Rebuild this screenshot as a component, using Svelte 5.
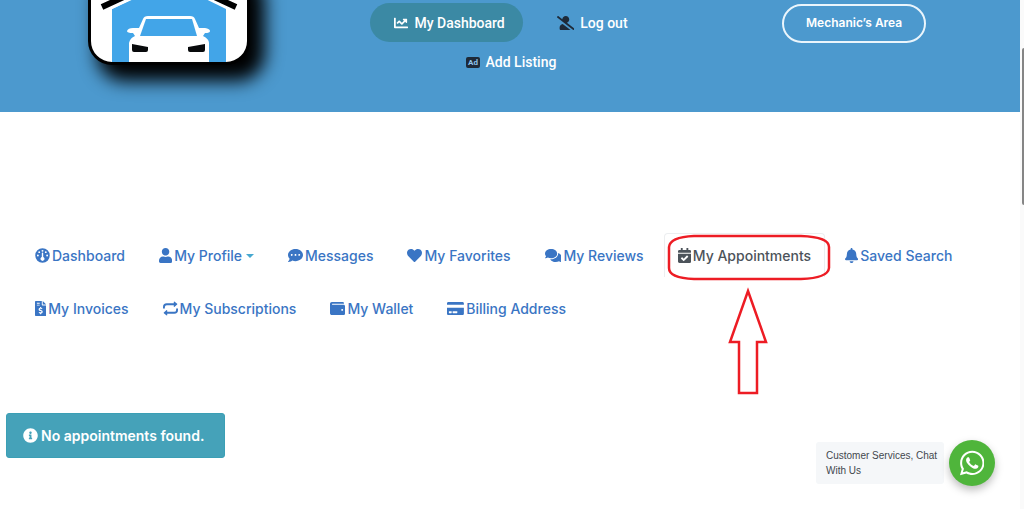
<script>
  const icons = {
    chart: { w: 512, d: 'M496 384H64V80c0-8.84-7.16-16-16-16H16C7.16 64 0 71.16 0 80v336c0 17.67 14.33 32 32 32h464c8.84 0 16-7.16 16-16v-32c0-8.84-7.16-16-16-16zM464 96H345.94c-21.38 0-32.09 25.85-16.97 40.97l32.4 32.4L288 242.75l-73.37-73.37c-12.5-12.5-32.76-12.5-45.25 0l-68.69 68.69c-6.25 6.25-6.25 16.38 0 22.63l22.62 22.62c6.25 6.25 16.38 6.25 22.63 0L192 237.25l73.37 73.37c12.5 12.5 32.76 12.5 45.25 0l96-96 32.4 32.4c15.12 15.12 40.97 4.41 40.97-16.97V112c.01-8.84-7.15-16-15.99-16z' },
    userSlash: { w: 640, d: 'M633.8 458.1L362.3 248.3C412.1 230.7 448 183.8 448 128 448 57.3 390.7 0 320 0c-67.1 0-121.5 51.8-126.9 117.4L45.5 3.4C38.5-2 28.5-.8 23 6.2L3.4 31.4c-5.4 7-4.2 17 2.8 22.4l588.4 454.7c7 5.4 17 4.2 22.5-2.8l19.6-25.3c5.4-6.8 4.1-16.9-2.9-22.3zM96 422.4V464c0 26.5 21.5 48 48 48h350.2L207.4 290.3C144.2 301.3 96 356 96 422.4z' },
    gauge: { w: 512, d: 'M256 8a248 248 0 1 0 0 496a248 248 0 1 0 0-496zM256 64a34 34 0 1 1 0 68a34 34 0 1 1 0-68zM144 110a32 32 0 1 1 0 64a32 32 0 1 1 0-64zM368 110a32 32 0 1 1 0 64a32 32 0 1 1 0-64zM98 222a32 32 0 1 1 0 64a32 32 0 1 1 0-64zM414 222a32 32 0 1 1 0 64a32 32 0 1 1 0-64zM232 180a24 24 0 0 1 48 0v128a68 68 0 1 1-48 0z' },
    user: { w: 448, d: 'M224 256c70.7 0 128-57.3 128-128S294.7 0 224 0 96 57.3 96 128s57.3 128 128 128zm89.6 32h-16.7c-22.2 10.2-46.9 16-72.9 16s-50.6-5.8-72.9-16h-16.7C60.2 288 0 348.2 0 422.4V464c0 26.5 21.5 48 48 48h352c26.5 0 48-21.5 48-48v-41.6c0-74.2-60.2-134.4-134.4-134.4z' },
    message: { w: 512, d: 'M256 32C114.6 32 0 125.1 0 240c0 49.6 21.4 95 57 130.7C44.5 421.1 2.7 466 2.2 466.5c-2.2 2.3-2.8 5.7-1.5 8.7S4.8 480 8 480c66.3 0 116-31.8 140.6-51.4 32.7 12.3 69 19.4 107.4 19.4 141.4 0 256-93.1 256-208S397.4 32 256 32zM128 272c-17.7 0-32-14.3-32-32s14.3-32 32-32 32 14.3 32 32-14.3 32-32 32zm128 0c-17.7 0-32-14.3-32-32s14.3-32 32-32 32 14.3 32 32-14.3 32-32 32zm128 0c-17.7 0-32-14.3-32-32s14.3-32 32-32 32 14.3 32 32-14.3 32-32 32z' },
    heart: { w: 512, d: 'M462.3 62.6C407.5 15.9 326 24.3 275.7 76.2L256 96.5l-19.7-20.3C186.1 24.3 104.5 15.9 49.7 62.6c-62.8 53.6-66.1 149.8-9.9 207.9l193.5 199.8c12.5 12.9 32.8 12.9 45.3 0l193.5-199.8c56.3-58.1 53-154.3-9.8-207.9z' },
    comments: { w: 576, d: 'M416 192c0-88.4-93.1-160-208-160S0 103.6 0 192c0 34.3 14.1 65.9 38 92-13.4 30.2-35.5 54.2-35.8 54.5-2.2 2.3-2.8 5.7-1.5 8.7S4.8 352 8 352c36.6 0 66.9-12.3 88.7-25 32.2 15.7 70.3 25 111.3 25 114.9 0 208-71.6 208-160zm122 220c23.9-26 38-57.7 38-92 0-66.9-53.5-124.2-129.3-148.1.9 6.6 1.3 13.3 1.3 20.1 0 105.9-107.7 192-240 192-10.8 0-21.3-.8-31.7-1.9C207.8 439.6 281.8 480 368 480c41 0 79.1-9.2 111.3-25 21.8 12.7 52.1 25 88.7 25 3.2 0 6.1-1.9 7.3-4.8 1.3-2.9.7-6.3-1.5-8.7-.3-.3-22.4-24.2-35.8-54.5z' },
    calendar: { w: 448, d: 'M436 160H12c-6.627 0-12-5.373-12-12v-36c0-26.51 21.49-48 48-48h48V12c0-6.627 5.373-12 12-12h40c6.627 0 12 5.373 12 12v52h128V12c0-6.627 5.373-12 12-12h40c6.627 0 12 5.373 12 12v52h48c26.51 0 48 21.49 48 48v36c0 6.627-5.373 12-12 12zM12 192h424c6.627 0 12 5.373 12 12v260c0 26.51-21.49 48-48 48H48c-26.51 0-48-21.49-48-48V204c0-6.627 5.373-12 12-12zm333.296 95.947l-28.169-28.398c-4.667-4.705-12.265-4.736-16.97-.068L194.12 364.665l-45.98-46.352c-4.667-4.705-12.266-4.736-16.971-.068l-28.397 28.17c-4.705 4.667-4.736 12.265-.068 16.97l82.601 83.269c4.667 4.705 12.265 4.736 16.97.068l142.953-141.805c4.705-4.667 4.736-12.265.068-16.97z' },
    bell: { w: 448, d: 'M224 512c35.32 0 63.97-28.65 63.97-64H160.03c0 35.35 28.65 64 63.97 64zm215.39-149.71c-19.32-20.76-55.47-51.99-55.47-154.29 0-77.7-54.48-139.9-127.94-155.16V32c0-17.67-14.32-32-31.98-32s-31.98 14.33-31.98 32v20.84C118.56 68.1 64.08 130.3 64.08 208c0 102.3-36.15 133.53-55.47 154.29-6 6.45-8.66 14.16-8.61 21.71.11 16.4 12.98 32 32.1 32h383.8c19.12 0 32-15.6 32.1-32 .05-7.55-2.61-15.27-8.61-21.71z' },
    invoice: { w: 384, d: 'M24 0H232V128a24 24 0 0 0 24 24H384V488a24 24 0 0 1-24 24H24a24 24 0 0 1-24-24V24A24 24 0 0 1 24 0zM64 60V92H160V60zM64 124V156H160V124zM264 0L384 120H264zM174 204V232C144 236 124 256 124 286C124 320 150 334 182 344C212 354 220 358 220 370C220 382 210 388 194 388C176 388 160 382 146 372L124 402C138 414 156 422 174 424V452H210V424C242 420 262 400 262 368C262 332 236 318 202 308C174 300 166 296 166 284C166 274 176 268 190 268C206 268 220 272 234 282L254 250C240 240 226 234 210 232V204z' },
    repeat: { w: 512, d: 'M0 256V208A128 128 0 0 1 128 80H368V36C368 18 386 12 398 22L484 98A16 16 0 0 1 484 122L398 198C386 208 368 202 368 184V144H128A64 64 0 0 0 64 208V256zM512 256V304A128 128 0 0 1 384 432H144V476C144 494 126 500 114 490L28 414A16 16 0 0 1 28 390L114 314C126 304 144 310 144 328V368H384A64 64 0 0 0 448 304V256z' },
    wallet: { w: 512, d: 'M461.2 128H80c-8.84 0-16-7.16-16-16s7.16-16 16-16h384c8.84 0 16-7.16 16-16 0-26.51-21.49-48-48-48H64C28.65 32 0 60.65 0 96v320c0 35.35 28.65 64 64 64h397.2c28.02 0 50.8-21.53 50.8-48V176c0-26.47-22.78-48-50.8-48zM416 336c-17.67 0-32-14.33-32-32s14.33-32 32-32 32 14.33 32 32-14.33 32-32 32z' },
    card: { w: 576, d: 'M0 432c0 26.5 21.5 48 48 48h480c26.5 0 48-21.5 48-48V228H0v204zm192-68c0-6.6 5.4-12 12-12h136c6.6 0 12 5.4 12 12v40c0 6.6-5.4 12-12 12H204c-6.6 0-12-5.4-12-12v-40zm-128 0c0-6.6 5.4-12 12-12h72c6.6 0 12 5.4 12 12v40c0 6.6-5.4 12-12 12H76c-6.6 0-12-5.4-12-12v-40zM576 80v48H0V80c0-26.5 21.5-48 48-48h480c26.5 0 48 21.5 48 48z' },
    info: { w: 512, d: 'M256 8C119.043 8 8 119.083 8 256c0 136.997 111.043 248 248 248s248-111.003 248-248C504 119.083 392.957 8 256 8zm0 110c23.196 0 42 18.804 42 42s-18.804 42-42 42-42-18.804-42-42 18.804-42 42-42zm56 254c0 6.627-5.373 12-12 12h-88c-6.627 0-12-5.373-12-12v-24c0-6.627 5.373-12 12-12h12v-64h-12c-6.627 0-12-5.373-12-12v-24c0-6.627 5.373-12 12-12h64c6.627 0 12 5.373 12 12v100h12c6.627 0 12 5.373 12 12v24z' },
    whatsapp: { w: 448, d: 'M380.9 97.1C339 55.1 283.2 32 223.9 32c-122.4 0-222 99.6-222 222 0 39.1 10.2 77.3 29.6 111L0 480l117.7-30.9c32.4 17.7 68.9 27 106.1 27h.1c122.3 0 224.1-99.6 224.1-222 0-59.3-25.2-115-67.1-157zm-157 341.6c-33.2 0-65.7-8.9-94-25.7l-6.7-4-69.8 18.3L72 359.2l-4.4-7c-18.5-29.4-28.2-63.3-28.2-98.2 0-101.7 82.8-184.5 184.6-184.5 49.3 0 95.6 19.2 130.4 54.1 34.8 34.9 56.2 81.2 56.1 130.5 0 101.8-84.9 184.6-186.6 184.6zm101.2-138.2c-5.5-2.8-32.8-16.2-37.9-18-5.1-1.9-8.8-2.8-12.5 2.8-3.7 5.6-14.3 18-17.6 21.8-3.2 3.7-6.5 4.2-12 1.4-32.6-16.3-54-29.1-75.5-66-5.7-9.8 5.7-9.1 16.3-30.3 1.8-3.7.9-6.9-.5-9.7-1.4-2.8-12.5-30.1-17.1-41.2-4.5-10.8-9.1-9.3-12.5-9.5-3.2-.2-6.9-.2-10.6-.2-3.7 0-9.7 1.4-14.8 6.9-5.1 5.6-19.4 19-19.4 46.3 0 27.3 19.9 53.7 22.6 57.4 2.8 3.7 39.1 59.7 94.8 83.8 35.2 15.2 49 16.5 66.6 13.9 10.7-1.6 32.8-13.4 37.4-26.4 4.6-13 4.6-24.1 3.2-26.4-1.3-2.5-5-3.9-10.5-6.6z' }
  };

  const tabs = [
    { label: 'Dashboard', icon: 'gauge' },
    { label: 'My Profile', icon: 'user', menu: true },
    { label: 'Messages', icon: 'message' },
    { label: 'My Favorites', icon: 'heart' },
    { label: 'My Reviews', icon: 'comments' },
    { label: 'My Appointments', icon: 'calendar', active: true },
    { label: 'Saved Search', icon: 'bell' },
    { label: 'My Invoices', icon: 'invoice' },
    { label: 'My Subscriptions', icon: 'repeat' },
    { label: 'My Wallet', icon: 'wallet' },
    { label: 'Billing Address', icon: 'card' }
  ];
</script>

{#snippet icon(name)}
  <svg class="icon" viewBox="0 0 {icons[name].w} 512" aria-hidden="true">
    <path d={icons[name].d} fill="currentColor" fill-rule="evenodd" />
  </svg>
{/snippet}

<div class="page">
  <div class="content">
    <header>
      <a class="logo" href="#home" aria-label="Home">
        <svg viewBox="0 0 156 96" aria-hidden="true">
          <path d="M21 96V43L78 15L135 43V96Z" fill="#42a5e8" />
          <path d="M12 43L78 12L144 40" fill="none" stroke="#fff" stroke-width="8" />
          <path d="M11 41L78 10L145 41" fill="none" stroke="#000" stroke-width="6" />
          <path d="M38 96V77Q39 72 44 70L42 67Q36 67 36 65Q37 62 42 62H48L52 53Q53 50 57 50H99Q103 50 104 53L108 62H114Q119 63 119 65Q119 67 114 67L112 70Q118 73 118 77V96Z" fill="#fff" />
          <path d="M55 53H101L106 70H49Z" fill="#42a5e8" />
          <path d="M41 78L57 81V84Q57 86 55 86H43Q41 86 41 84ZM114 78L97 81V84Q97 86 99 86H112Q114 86 114 84Z" fill="#080a0c" />
        </svg>
      </a>
      <nav class="site-nav" aria-label="Site">
        <a class="pill current" href="#dashboard">{@render icon('chart')}My Dashboard</a>
        <a class="pill dark" href="#logout">{@render icon('userSlash')}<span>Log out</span></a>
        <a class="pill dark" href="#add">
          <svg class="icon" viewBox="0 0 14 14" aria-hidden="true">
            <rect y="2" width="14" height="11" rx="2" fill="currentColor" />
            <text x="7" y="10" text-anchor="middle">Ad</text>
          </svg>
          <span>Add Listing</span>
        </a>
      </nav>
      <a class="area" href="#mechanics">Mechanic’s Area</a>
    </header>

    <main>
      <nav aria-label="Account">
        <ul class="tabs">
          {#each tabs as tab}
            <li class:active={tab.active}>
              <a href="#tab" aria-current={tab.active ? 'page' : undefined}>
                {@render icon(tab.icon)}{tab.label}
                {#if tab.menu}<span class="caret"></span>{/if}
              </a>
              {#if tab.active}
                <svg class="callout" viewBox="0 0 168 164" aria-hidden="true">
                  <path d="M30 4H137Q165 5 165 15V36Q164 46 137 47H30Q5 46 5 36V15Q6 5 30 4Z" />
                  <path d="M84 59L102 110H93V161H75V110H66Z" />
                </svg>
              {/if}
            </li>
          {/each}
        </ul>
      </nav>
      <p class="notice" role="status">{@render icon('info')}No appointments found.</p>
    </main>
  </div>
  <div class="track" aria-hidden="true"><div class="thumb"></div></div>
</div>

<aside class="chat">
  <p>Customer Services, Chat With Us</p>
  <button type="button" aria-label="Open chat">{@render icon('whatsapp')}</button>
</aside>

<style>
  :global(body) { margin: 0; background: #fff; }
  a { text-decoration: none; color: inherit; }
  .page {
    display: flex;
    min-height: 100vh;
    font-family: Inter, "Liberation Sans", sans-serif;
  }
  .content { flex: 1; min-width: 0; }
  .icon { height: 14px; flex: none; }

  header {
    display: grid;
    grid-template-columns: 1fr 300px 1fr;
    align-items: start;
    height: 112px;
    background: #4c99ce;
  }
  .logo {
    justify-self: end;
    width: 156px;
    height: 96px;
    margin: -37px 110px 0 0;
    border: 3px solid #000;
    border-radius: 24px;
    background: #fff;
    box-shadow: 12px 13px 18px 3px #000;
  }
  .logo svg { display: block; width: 100%; height: 100%; border-radius: 21px; }
  .site-nav {
    display: flex;
    flex-wrap: wrap;
    justify-content: center;
    column-gap: 10px;
    padding: 3px 4px 0 0;
    font: 500 14px/38px Roboto, sans-serif;
    color: #fff;
  }
  .pill {
    display: flex;
    align-items: center;
    gap: 6px;
    height: 39px;
    padding: 0 18px 0 24px;
    border-radius: 20px;
  }
  .current { background: #3b89a4; }
  .dark .icon { color: #1e2a38; }
  .pill text { font: bold 8px Roboto, sans-serif; fill: #8fc4ec; }
  .area {
    justify-self: start;
    box-sizing: border-box;
    height: 39px;
    margin: 4px 0 0 122px;
    padding: 0 22px;
    border: 2px solid #eaf5fc;
    border-radius: 20px;
    font-size: 12px;
    font-weight: 600;
    line-height: 34px;
    white-space: nowrap;
    color: #fff;
  }

  main { padding: 121px 6px 0; }
  .tabs {
    display: flex;
    flex-wrap: wrap;
    margin: 0;
    padding: 0 12px;
    row-gap: 9px;
    list-style: none;
  }
  li { position: relative; margin: 0 3px; }
  li a {
    display: flex;
    align-items: center;
    gap: 2px;
    padding: 0 13px;
    border: 1px solid transparent;
    border-bottom: 0;
    border-radius: 4px 4px 0 0;
    font-size: 14px;
    font-weight: 500;
    line-height: 43px;
    white-space: nowrap;
    color: #3a75c4;
  }
  .active a { border-color: #eceef0; color: #4c535a; }
  .tabs .icon, .notice .icon { height: 15px; }
  .caret {
    margin-left: 2px;
    border: 4px solid transparent;
    border-top-color: #46a8d0;
    border-bottom: 0;
  }
  .callout {
    position: absolute;
    top: -1px;
    left: 0;
    width: 168px;
    height: 164px;
    fill: none;
    stroke: #ed1c24;
    stroke-width: 2.5;
    pointer-events: none;
  }
  .notice {
    display: flex;
    align-items: center;
    gap: 3px;
    width: fit-content;
    margin: 83px 0 0;
    padding: 0 20px 0 16px;
    border: 1px solid #3b9fb5;
    border-radius: 3px;
    background: #45a2b9;
    font-size: 14px;
    font-weight: 600;
    line-height: 43px;
    color: #fff;
  }

  .track { width: 4px; background: #fafafa; }
  .thumb {
    width: 2px;
    height: 157px;
    margin: 48px 0 0 auto;
    background: #858585;
    border-radius: 2px 0 0 2px;
  }

  .chat {
    position: fixed;
    right: 29px;
    bottom: 23px;
    display: flex;
    align-items: center;
    gap: 5px;
  }
  .chat p {
    width: 115px;
    margin: 0;
    padding: 6px 3px 6px 10px;
    border-radius: 3px;
    background: #f5f7f9;
    font: 10px/15px "Liberation Sans", sans-serif;
    color: #43474e;
  }
  .chat button {
    display: grid;
    place-items: center;
    width: 46px;
    height: 46px;
    padding: 0;
    border: 0;
    border-radius: 50%;
    background: #4fb53b;
    box-shadow: 0 4px 8px #0004;
    color: #fff;
  }
  .chat .icon { height: 28px; }
</style>
